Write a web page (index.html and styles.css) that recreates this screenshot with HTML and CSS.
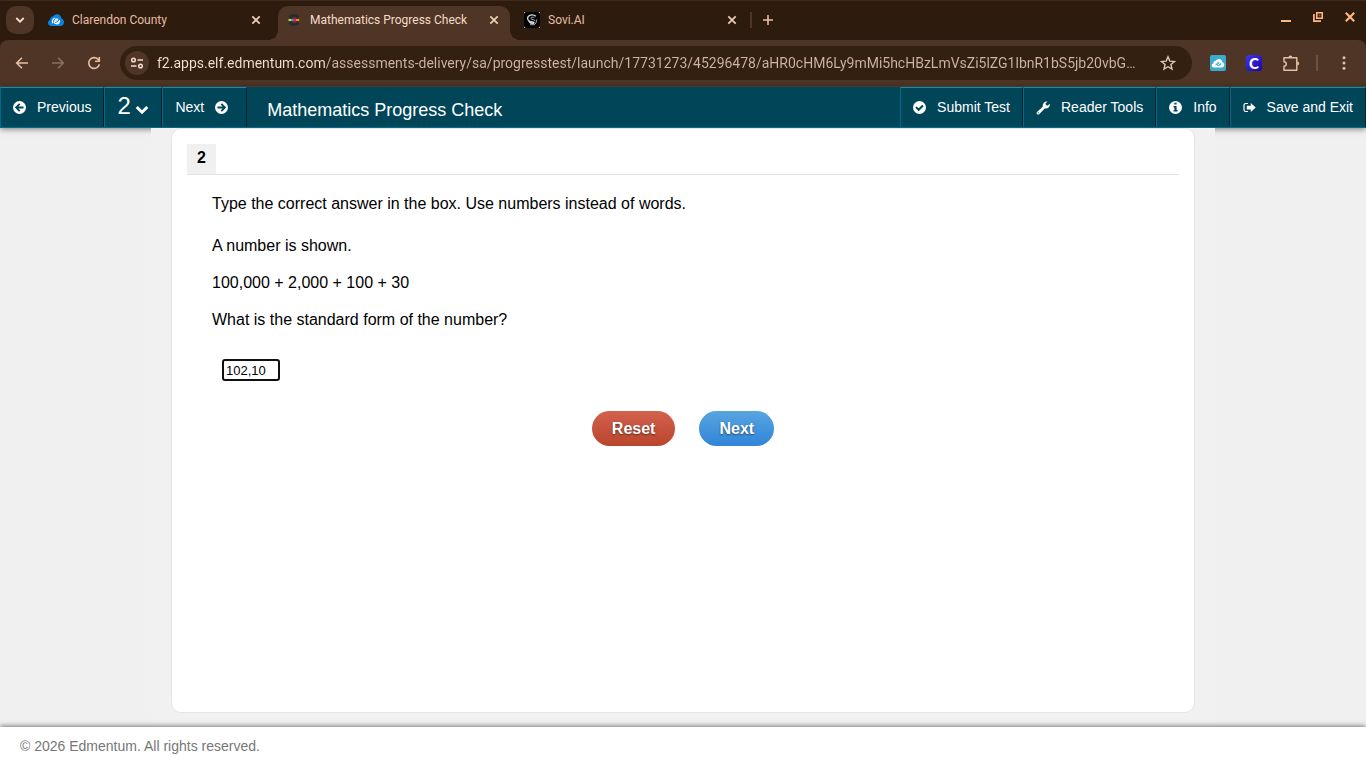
FILE: index.html
```html
<!DOCTYPE html>
<html lang="en">
<head>
<meta charset="utf-8">
<meta name="viewport" content="width=device-width, initial-scale=1">
<title>Mathematics Progress Check</title>
<link rel="stylesheet" href="styles.css">
</head>
<body>
<div class="browser">
  <div class="tabstrip">
    <button class="tab-search" aria-label="Search tabs"><svg width="10" height="10" viewBox="0 0 10 10"><path d="M1.300 3L5 6.700 8.700 3" fill="none" stroke="currentColor" stroke-width="1.800"/></svg></button>
    <div class="tab">
      <svg class="favicon" width="16" height="16" viewBox="0 0 16 16"><path d="M3.500 14C1.500 14 0 12.700 0 11c0-1.500 1-2.600 2.200-2.900C1.900 5.500 3.600 4.200 5.100 4.400 6 2.900 7.400 2.200 9 2.200c2.600 0 4.300 1.900 4.400 4.400C15 7.200 16 8.600 16 10.300 16 12.500 14.400 14 12.300 14z" fill="#0a84dc"/><path d="M5.600 10.300C8 9.900 10.200 8 9.500 7 8.700 6.200 6.300 8.400 6.600 10.600c.4 1.700 2.700.8 4.400-1.200M8.300 12c2.200.2 3.900-1.900 3.100-4.100M4.600 11.300C3.800 8.500 5.300 6.500 7.200 6" fill="none" stroke="#fff" stroke-width="1.100"/></svg>
      <a class="tab-title" href="#">Clarendon County</a>
      <button class="tab-close" aria-label="Close Clarendon County"><svg width="10" height="10" viewBox="0 0 10 10"><path d="M1.300 1.300l7.400 7.400M8.700 1.300L1.300 8.700" stroke="currentColor" stroke-width="1.700"/></svg></button>
    </div>
    <div class="tab tab-active">
      <svg class="favicon" width="16" height="16" viewBox="0 0 16 16"><path d="M3.900 5.600a4.800 4.800 0 0 1 8.200 0M3.900 10.400a4.800 4.800 0 0 0 8.200 0" fill="none" stroke="#222a30" stroke-width="2.600"/><path d="M2.500 8H5" stroke="#b5dc2c" stroke-width="2"/><path d="M5 8h2" stroke="#18b8dc" stroke-width="2"/><path d="M7 8h3" stroke="#f3158c" stroke-width="2.600"/><path d="M10 8h3.200" stroke="#f78a1e" stroke-width="2"/></svg>
      <a class="tab-title" href="#">Mathematics Progress Check</a>
      <button class="tab-close" aria-label="Close Mathematics Progress Check"><svg width="10" height="10" viewBox="0 0 10 10"><path d="M1.300 1.300l7.400 7.400M8.700 1.300L1.300 8.700" stroke="currentColor" stroke-width="1.700"/></svg></button>
    </div>
    <div class="tab">
      <svg class="favicon" width="16" height="16" viewBox="0 0 16 16"><rect width="16" height="16" fill="#fff"/><rect width="16" height="16" rx="2" fill="#000"/><path d="M12 4.300C8.500 1.500 3.500 3 3.600 6.600c.1 2.600 3 3.200 5 3.300 1.900.1 1.700 1.600.2 1.600-1.700 0-3.300-.7-4-2.200" fill="none" stroke="#ddd" stroke-width="1.300"/><path d="M10.500 5.800c-1.900-1.300-4.200-.5-3.700.8.500 1.200 4.100.6 4.500 2.600M12.800 7.500c0 3-1.500 4.700-2.800 5.200H6" fill="none" stroke="#aaa"/></svg>
      <a class="tab-title" href="#">Sovi.AI</a>
      <button class="tab-close" aria-label="Close Sovi.AI"><svg width="10" height="10" viewBox="0 0 10 10"><path d="M1.300 1.300l7.400 7.400M8.700 1.300L1.300 8.700" stroke="currentColor" stroke-width="1.700"/></svg></button>
    </div>
    <span class="tab-divider"></span>
    <button class="new-tab" aria-label="New tab"><svg width="12" height="12" viewBox="0 0 12 12"><path d="M6 1v10M1 6h10" stroke="currentColor" stroke-width="1.600"/></svg></button>
    <div class="window-controls">
      <button aria-label="Minimize"><svg width="12" height="12" viewBox="0 0 12 12"><path d="M1 10h10" stroke="currentColor" stroke-width="2"/></svg></button>
      <button aria-label="Restore"><svg width="12" height="12" viewBox="0 0 12 12"><path d="M4.750 1.750h5.500v5.500h-5.500z" fill="none" stroke="currentColor" stroke-width="1.600"/><path d="M1.900 3v7.200H9" fill="none" stroke="currentColor" stroke-width="1.700"/><path d="M6.500 3.500h2v2h-2z" fill="currentColor" opacity=".4"/></svg></button>
      <button aria-label="Close window"><svg width="12" height="12" viewBox="0 0 12 12"><path d="M1.800 1.800l8.400 8.400M10.200 1.800l-8.400 8.400" stroke="currentColor" stroke-width="2.200"/></svg></button>
    </div>
  </div>
  <div class="toolbar">
    <button class="nav-button" aria-label="Back"><svg width="16" height="16" viewBox="0 0 16 16"><path d="M14 8H3M8 2.700L2.700 8 8 13.300" fill="none" stroke="currentColor" stroke-width="1.600"/></svg></button>
    <button class="nav-button" aria-label="Forward" disabled><svg width="16" height="16" viewBox="0 0 16 16"><path d="M2 8h11M8 2.700L13.300 8 8 13.300" fill="none" stroke="currentColor" stroke-width="1.600"/></svg></button>
    <button class="nav-button" aria-label="Reload"><svg width="16" height="16" viewBox="0 0 16 16"><path d="M13.400 9.300A5.400 5.400 0 1 1 12 4.200L13.200 5.500M13.300 2v4.300H9" fill="none" stroke="currentColor" stroke-width="1.600"/></svg></button>
    <div class="omnibox">
      <button class="site-info" aria-label="View site information"><svg width="14" height="14" viewBox="0 0 14 14"><path d="M7.500 4H13M1 10h5.500" stroke="currentColor" stroke-width="1.600"/><circle cx="3.500" cy="4" r="1.800" fill="none" stroke="currentColor" stroke-width="1.500"/><circle cx="10.500" cy="10" r="1.800" fill="none" stroke="currentColor" stroke-width="1.500"/></svg></button>
      <input class="address" type="text" aria-label="Address bar" value="f2.apps.elf.edmentum.com/assessments-delivery/sa/progresstest/launch/17731273/45296478/aHR0cHM6Ly9mMi5hcHBzLmVsZi5lZG1lbnR1bS5jb20vbG…">
      <button class="bookmark" aria-label="Bookmark this tab"><svg width="16" height="16" viewBox="0 0 16 16"><path d="M8 1.800l1.800 4.300 4.700.4-3.600 3 1.100 4.600L8 11.700l-4 2.400 1.100-4.600-3.600-3 4.700-.4z" fill="none" stroke="currentColor" stroke-width="1.400"/></svg></button>
    </div>
    <button class="extension" aria-label="Cloud extension"><svg width="16" height="16" viewBox="0 0 16 16"><rect width="16" height="16" rx="2" fill="#3dabd0"/><path d="M4 12.400c-1.400 0-2.300-.9-2.300-2 0-1.200.8-1.900 1.700-2 0-1.700 1.100-2.700 2.400-2.500C6.600 4.700 7.700 4 9 4c1.900 0 3.200 1.400 3.300 3.300 1.200.3 2 1.300 2 2.500 0 1.500-1.100 2.600-2.700 2.600z" fill="#fff"/><path d="M5.500 9.700c2.100 0 4.200-1.500 3.300-2.300-.8-.6-2.500 1.200-2 2.500.5 1 2.300.4 3.400-1M8.700 10.800c1.500 0 2.300-1.400 1.900-2.600" fill="none" stroke="#3dabd0"/></svg></button>
    <button class="extension extension-c" aria-label="C extension">C</button>
    <button class="extension puzzle" aria-label="Extensions"><svg width="18" height="18" viewBox="0 0 18 18"><path d="M2 3.800h12.800v12.400H2v-4c3-.3 3-4.100 0-4.400z" fill="none" stroke="currentColor" stroke-width="1.500" stroke-linejoin="round"/><path d="M6.400 3.500a2 2 0 0 1 4 0zM15.200 7.600a2 2 0 0 1 0 4z" fill="currentColor"/></svg></button>
    <span class="toolbar-divider"></span>
    <button class="extension menu" aria-label="Browser menu"><svg width="16" height="16" viewBox="0 0 16 16" fill="currentColor"><circle cx="8" cy="2.800" r="1.500"/><circle cx="8" cy="8" r="1.500"/><circle cx="8" cy="13.200" r="1.500"/></svg></button>
  </div>
</div>

<header class="test-bar">
  <button class="bar-button"><svg width="13" height="13" viewBox="0 0 12 12"><circle cx="6" cy="6" r="6" fill="currentColor"/><path d="M9.700 6H3.500M6.200 2.700L2.900 6l3.300 3.300" fill="none" stroke="#004558" stroke-width="1.700"/></svg>Previous</button>
  <label class="bar-button question-picker"><select aria-label="Question number"><option>2</option></select><svg width="14" height="10" viewBox="0 0 14 10"><path d="M1.700 2l5.300 5.200L12.300 2" fill="none" stroke="currentColor" stroke-width="3"/></svg></label>
  <button class="bar-button">Next<svg class="next-icon" width="13" height="13" viewBox="0 0 12 12"><circle cx="6" cy="6" r="6" fill="currentColor"/><path d="M2.300 6h6.200M5.800 2.700L9.100 6 5.800 9.300" fill="none" stroke="#004558" stroke-width="1.700"/></svg></button>
  <h1 class="test-title">Mathematics Progress Check</h1>
  <button class="bar-button"><svg width="13" height="13" viewBox="0 0 12 12"><circle cx="6" cy="6" r="6" fill="currentColor"/><path d="M2.800 5.700l2.400 2.400 4-4" fill="none" stroke="#004558" stroke-width="1.800"/></svg>Submit Test</button>
  <button class="bar-button"><svg width="14" height="14" viewBox="0 0 13 13"><path d="M6.300 5.300C5.700 2.500 7.800 0 10.700.4L8.900 2.100l.3 1.800 1.800.3 1.700-1.700c.8 3.200-2 5.200-4.600 4.400L2.900 12.200c-1.200 1.300-3.200-.7-2-2z" fill="currentColor"/><circle cx="2" cy="11" r=".6" fill="#004558"/></svg>Reader Tools</button>
  <button class="bar-button"><svg width="13" height="13" viewBox="0 0 12 12"><circle cx="6" cy="6" r="6" fill="currentColor"/><path d="M5 1.700h2v1.600H5zM4.200 4.500H7v3.900h.9v1.400H4.200V8.400H5V5.900h-.8z" fill="#004558"/></svg>Info</button>
  <button class="bar-button"><svg width="13" height="12" viewBox="0 0 13 12"><path d="M5 1.500H2.800C1.700 1.500 1 2.200 1 3.300v4.400c0 1.100.7 1.800 1.800 1.800H5" fill="none" stroke="currentColor" stroke-width="1.200"/><path d="M3.800 3.800h4V1L12.700 5.500 7.800 10V7.400h-4z" fill="currentColor"/></svg>Save and Exit</button>
</header>

<main class="stage">
  <div class="column">
    <section class="card">
      <div class="question-head"><h2 class="question-number">2</h2></div>
      <form class="question">
        <p class="instruction">Type the correct answer in the box. Use numbers instead of words.</p>
        <p>A number is shown.</p>
        <p>100,000 + 2,000 + 100 + 30</p>
        <p><label for="answer">What is the standard form of the number?</label></p>
        <input class="answer" id="answer" type="text" value="102,10">
      </form>
      <div class="actions">
        <button class="pill reset" type="button">Reset</button>
        <button class="pill next" type="button">Next</button>
      </div>
    </section>
  </div>
</main>

<footer class="footer">© 2026 Edmentum. All rights reserved.</footer>
</body>
</html>
```

FILE: styles.css
```css
* { box-sizing: border-box; }

body {
  margin: 0;
  min-height: 100vh;
  display: flex;
  flex-direction: column;
  background: #f0f0f0;
  color: #000;
  font: 16px/21px "Liberation Sans", Arial, sans-serif;
}

button, input, select { font: inherit; color: inherit; }
button {
  display: inline-flex;
  align-items: center;
  justify-content: center;
  padding: 0;
  border: 0;
  background: none;
  cursor: pointer;
}
svg { display: block; flex: none; }
h1, h2, p { margin: 0; }

/* Browser chrome */
.browser { background: #2d1b0e; color: #e6bea4; font: 12px/16px Roboto, sans-serif; }
.tabstrip {
  display: flex;
  align-items: center;
  height: 40px;
  padding-left: 6px;
  box-shadow: inset 0 1px #3f2a1c;
}
.tab-search { width: 28px; height: 28px; border-radius: 10px; background: #4e3525; color: #f5dccb; }
.tab {
  display: flex;
  align-items: center;
  align-self: flex-end;
  gap: 8px;
  width: 238px;
  height: 34px;
  padding: 0 6px 6px 14px;
}
.tab-title { flex: 1; color: inherit; text-decoration: none; white-space: nowrap; }
.tab-close { width: 20px; height: 20px; color: #f0d0b8; }
.tab-active {
  position: relative;
  width: 232px;
  margin-left: 6px;
  padding-left: 8px;
  border-radius: 10px 10px 0 0;
  background: #4e3525;
  color: #f5dccb;
}
.tab-active::before, .tab-active::after {
  content: "";
  position: absolute;
  bottom: 0;
  width: 10px;
  height: 10px;
}
.tab-active::before { right: 100%; background: radial-gradient(circle at 0 0, #2d1b0e 10px, #4e3525 10px); }
.tab-active::after { left: 100%; background: radial-gradient(circle at 100% 0, #2d1b0e 10px, #4e3525 10px); }
.tab-divider { width: 2px; height: 16px; margin: 0 10px 0 2px; background: #4e3525; }
.new-tab { width: 12px; height: 12px; }
.window-controls { display: flex; gap: 20px; margin-left: auto; padding: 0 10px 6px 0; color: #ffb682; }

.toolbar {
  display: flex;
  align-items: center;
  height: 47px;
  padding: 0 14px;
  border-bottom: 1px solid #5e4434;
  border-radius: 8px 8px 0 0;
  background: #4e3525;
}
.nav-button { width: 16px; height: 16px; margin-right: 20px; }
.nav-button:disabled { color: #8d705c; }
.omnibox {
  display: flex;
  align-items: center;
  flex: 1;
  min-width: 0;
  height: 34px;
  margin-left: -2px;
  padding: 0 16px 0 5px;
  border-radius: 17px;
  background: #342011;
}
.site-info { width: 24px; height: 24px; margin-right: 8px; border-radius: 12px; background: #4e3525; color: #f5dccb; }
.address {
  flex: 1;
  min-width: 0;
  height: 24px;
  padding: 0;
  border: 0;
  outline: 0;
  font-size: 14px;
  color: #d5bfb0;
  -webkit-text-fill-color: transparent;
  background: linear-gradient(90deg, #f8e0d2 168px, #cfb5a4 168px);
  -webkit-background-clip: text;
  background-clip: text;
}
.bookmark { margin-left: 16px; color: #ddc6b7; }
.extension { width: 16px; height: 16px; margin-left: 20px; }
.omnibox + .extension { margin-left: 18px; }
.extension-c {
  border-radius: 3px;
  background: linear-gradient(135deg, #3f35ee, #1a04a8);
  color: #fff;
  font: 900 15px/16px Lato, sans-serif;
}
.puzzle { width: 18px; height: 18px; }
.toolbar-divider { width: 2px; height: 16px; margin-left: 16px; background: #6d503d; }
.menu { margin-left: 18px; }

/* Test navigation bar */
.test-bar {
  position: relative;
  display: flex;
  height: 41px;
  border-bottom: 1px solid #006a8c;
  background: #004558;
  color: #fff;
  font-size: 14px;
  box-shadow: 0 1px 6px rgba(0, 0, 0, .5);
}
.bar-button {
  display: flex;
  align-items: center;
  gap: 11px;
  padding: 0 12px;
  border: 1px solid;
  border-color: #0c8fbb #001f29 transparent #006a8c;
  border-bottom: 0;
  white-space: nowrap;
}
.next-icon { margin-right: 6px; }
.question-picker { gap: 4px; }
.question-picker select { appearance: none; border: 0; padding: 0 0 4px; background: none; font-size: 24px; line-height: 28px; }
.question-picker svg { margin-top: 4px; }
.test-title { flex: 1; padding: 0 20px; font-size: 18px; font-weight: 400; line-height: 46px; white-space: nowrap; }

/* Question area */
.stage { display: flex; flex: 1; justify-content: center; }
.column {
  position: relative;
  z-index: 1;
  display: flex;
  width: 100%;
  max-width: 1064px;
  padding: 0 20px 14px;
  background: #f1f1f1;
}
.card { flex: 1; padding: 15px; border: 1px solid #e5e5e5; border-radius: 10px; background: #fff; }
.question-head { display: flex; border-bottom: 1px solid #e3e3e3; }
.question-number { padding: 3px 10px 6px; background: #f0f0f0; font-size: 16px; }
.question { padding: 18px 25px 0; }
.question p { margin-bottom: 16px; }
.question .instruction { margin-bottom: 21px; }
.answer {
  display: block;
  width: 58px;
  height: 22px;
  margin: 29px 0 0 10px;
  padding: 0 2px;
  border: 2px solid #101010;
  border-radius: 3px;
  outline: 0;
  background: #fff;
  font-size: 13px;
}
.actions { display: flex; justify-content: center; gap: 24px; margin-top: 30px; }
.pill {
  height: 35px;
  padding: 0 20px;
  border-radius: 18px;
  color: #fff;
  font-weight: 700;
  text-shadow: 0 1px 2px rgba(0, 0, 0, .5);
}
.reset { background: linear-gradient(#d4614d, #b9452c); }
.next { background: linear-gradient(#58a5e0, #3184d8); }

.footer {
  position: relative;
  z-index: 2;
  padding: 9px 20px 11px;
  background: #fff;
  color: #777;
  font-size: 14px;
  box-shadow: 0 -1px 5px rgba(0, 0, 0, .5);
}
```
